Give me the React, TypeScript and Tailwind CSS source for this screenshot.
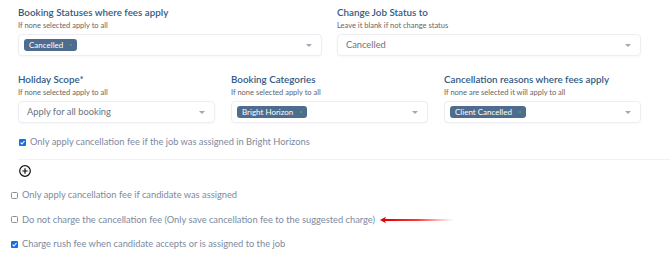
const font = { fontFamily: 'Lato, "Liberation Sans", sans-serif' };

function Caret() {
  return <span className="ml-auto mr-[9px] h-0 w-0 border-x-[3px] border-t-[3px] border-x-transparent border-t-[#a3a8af]" />;
}

function Field({ label, hint, tag, value }: { label: string; hint: string; tag?: string; value?: string }) {
  return (
    <div className="flex flex-col">
      <div className="whitespace-nowrap text-[9.8px] font-semibold leading-[14px] text-[#2f5b85]">{label}</div>
      <div className="mt-[2px] text-[7.5px] leading-[10px] text-[#666]">{hint}</div>
      <div className="mt-[3px] flex h-[22px] items-center rounded-[4px] border border-[#eceef1] bg-white pl-[5px] shadow-[0_1px_2px_rgba(0,0,0,0.03)]">
        {tag ? (
          <span className="flex h-[12px] items-center gap-[7px] rounded-[3px] bg-[#4e6d8e] pl-[5px] pr-[5px] text-[8px] text-white">
            {tag}
            <span className="h-[2px] w-[2px] rounded-full bg-[#3fae5a]" />
          </span>
        ) : (
          <span className="pl-[3px] text-[9.3px] text-[#6b7280]">{value}</span>
        )}
        <Caret />
      </div>
    </div>
  );
}

function Box({ checked }: { checked?: boolean }) {
  return checked ? (
    <svg width="7" height="7" viewBox="0 0 7 7" className="shrink-0">
      <rect x="0" y="0" width="7" height="7" rx="1" fill="#1a6fe0" />
      <path d="M1.6 3.6 L3 5 L5.5 2" stroke="#fff" strokeWidth="1.1" fill="none" />
    </svg>
  ) : (
    <svg width="7" height="7" viewBox="0 0 7 7" className="shrink-0">
      <rect x="0.5" y="0.5" width="6" height="6" rx="1" fill="#fff" stroke="#8a8f96" />
    </svg>
  );
}

function Check({ checked, children }: { checked?: boolean; children: React.ReactNode }) {
  return (
    <div className="flex items-center gap-[4px] whitespace-nowrap text-[9.3px] leading-[12px] text-[#7b8aa0]">
      <Box checked={checked} />
      <span>{children}</span>
    </div>
  );
}

export default function App() {
  return (
    <div className="h-[260px] w-[670px] overflow-hidden bg-white" style={font}>
      <div className="pl-[18px] pr-[29px] pt-[5px]">
        <div className="grid grid-cols-2 gap-[15px]">
          <Field label="Booking Statuses where fees apply" hint="If none selected apply to all" tag="Cancelled" />
          <Field label="Change Job Status to" hint="Leave it blank if not change status" value="Cancelled" />
        </div>
        <div className="mt-[16px] grid grid-cols-3 gap-[16px]">
          <Field label="Holiday Scope*" hint="If none selected apply to all" value="Apply for all booking" />
          <Field label="Booking Categories" hint="If none selected apply to all" tag="Bright Horizon" />
          <Field label="Cancellation reasons where fees apply" hint="If none are selected it will apply to all" tag="Client Cancelled" />
        </div>
        <div className="mt-[13px] pl-[1px]">
          <Check checked>Only apply cancellation fee if the job was assigned in Bright Horizons</Check>
        </div>
      </div>
      <div className="ml-[18px] mt-[11px] h-px bg-[#eff0f2]" />
      <div className="ml-[19px] mt-[5px]">
        <svg width="12" height="12" viewBox="0 0 12 12" fill="none" stroke="#111" strokeWidth="1.2">
          <circle cx="6" cy="6" r="5.3" />
          <path d="M6 3.3v5.4M3.3 6h5.4" />
        </svg>
      </div>
      <div className="ml-[11px] mt-[12px] flex flex-col gap-[12.5px]">
        <Check>Only apply cancellation fee if candidate was assigned</Check>
        <div className="flex items-center">
          <Check>Do not charge the cancellation fee (Only save cancellation fee to the suggested charge)</Check>
          <svg width="74" height="8" viewBox="0 0 74 8" className="ml-[5px]">
            <defs>
              <linearGradient id="ar" x1="0" x2="1" y1="0" y2="0">
                <stop offset="0" stopColor="#e00000" />
                <stop offset="0.5" stopColor="#ff1a1a" />
                <stop offset="1" stopColor="#ff3030" stopOpacity="0" />
              </linearGradient>
            </defs>
            <path d="M0 4 L6 0.8 L5 3 L74 3.3 L74 4.7 L5 5 L6 7.2 Z" fill="url(#ar)" />
          </svg>
        </div>
        <Check checked>Charge rush fee when candidate accepts or is assigned to the job</Check>
      </div>
    </div>
  );
}
